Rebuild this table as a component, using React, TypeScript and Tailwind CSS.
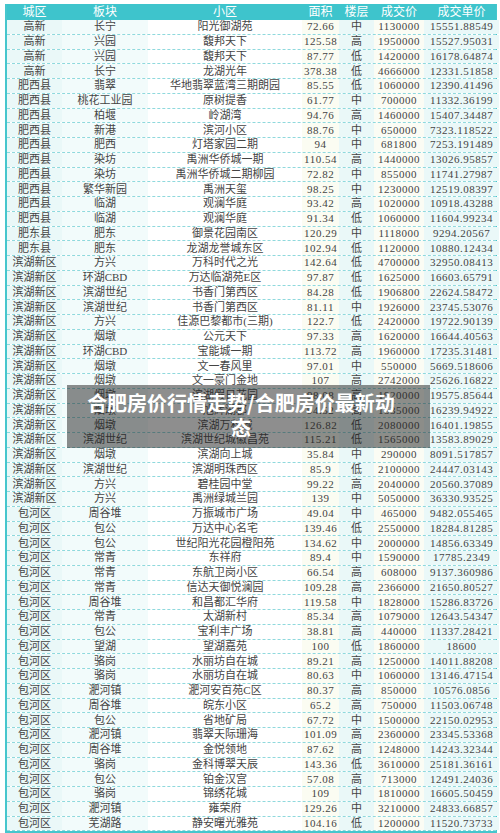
import React from "react";

type Row = [string, string, string, string, string, string, string];

const rows: Row[] = [
  ["高新", "长宁", "阳光御湖苑", "72.66", "中", "1130000", "15551.88549"],
  ["高新", "兴园", "馥邦天下", "125.58", "高", "1950000", "15527.95031"],
  ["高新", "兴园", "馥邦天下", "87.77", "低", "1420000", "16178.64874"],
  ["高新", "长宁", "龙湖光年", "378.38", "低", "4666000", "12331.51858"],
  ["肥西县", "翡翠", "华地翡翠蓝湾三期朗园", "85.55", "低", "1060000", "12390.41496"],
  ["肥西县", "桃花工业园", "原树提香", "61.77", "中", "700000", "11332.36199"],
  ["肥西县", "柏堰", "岭湖湾", "94.76", "高", "1460000", "15407.34487"],
  ["肥西县", "新港", "滨河小区", "88.76", "中", "650000", "7323.118522"],
  ["肥西县", "肥西", "灯塔家园二期", "94", "中", "681800", "7253.191489"],
  ["肥西县", "染坊", "禹洲华侨城一期", "110.54", "高", "1440000", "13026.95857"],
  ["肥西县", "染坊", "禹洲华侨城二期柳园", "72.82", "中", "855000", "11741.27987"],
  ["肥西县", "繁华新园", "禹洲天玺", "98.25", "中", "1230000", "12519.08397"],
  ["肥西县", "临湖", "观澜华庭", "93.42", "高", "1020000", "10918.43288"],
  ["肥西县", "临湖", "观澜华庭", "91.34", "低", "1060000", "11604.99234"],
  ["肥东县", "肥东", "御景花园南区", "120.29", "中", "1118000", "9294.20567"],
  ["肥东县", "肥东", "龙湖龙誉城东区", "102.94", "低", "1120000", "10880.12434"],
  ["滨湖新区", "方兴", "万科时代之光", "142.64", "低", "4700000", "32950.08413"],
  ["滨湖新区", "环湖CBD", "万达临湖苑E区", "97.87", "低", "1625000", "16603.65791"],
  ["滨湖新区", "滨湖世纪", "书香门第西区", "84.28", "低", "1906800", "22624.58472"],
  ["滨湖新区", "滨湖世纪", "书香门第西区", "81.11", "中", "1926000", "23745.53076"],
  ["滨湖新区", "方兴", "佳源巴黎都市(三期)", "122.7", "低", "2420000", "19722.90139"],
  ["滨湖新区", "烟墩", "公元天下", "97.33", "高", "1620000", "16644.40563"],
  ["滨湖新区", "环湖CBD", "宝能城一期", "113.72", "高", "1960000", "17235.31481"],
  ["滨湖新区", "烟墩", "文一春风里", "97.01", "中", "550000", "5669.518606"],
  ["滨湖新区", "烟墩", "文一豪门金地", "107", "高", "2742000", "25626.16822"],
  ["滨湖新区", "烟墩", "滨湖假日花园", "98.08", "高", "1920000", "19575.85644"],
  ["滨湖新区", "烟墩", "旭辉湖郡", "94.52", "高", "1535000", "16239.94922"],
  ["滨湖新区", "烟墩", "滨湖万科城", "126.82", "低", "2080000", "16401.19855"],
  ["滨湖新区", "滨湖世纪", "滨湖世纪城徽昌苑", "115.21", "低", "1565000", "13583.89029"],
  ["滨湖新区", "烟墩", "滨湖向上城", "35.84", "中", "290000", "8091.517857"],
  ["滨湖新区", "滨湖世纪", "滨湖明珠西区", "85.9", "低", "2100000", "24447.03143"],
  ["滨湖新区", "方兴", "碧桂园中堂", "99.22", "高", "2040000", "20560.37089"],
  ["滨湖新区", "方兴", "禹洲绿城兰园", "139", "中", "5050000", "36330.93525"],
  ["包河区", "周谷堆", "万振城市广场", "49.04", "中", "465000", "9482.055465"],
  ["包河区", "包公", "万达中心名宅", "139.46", "低", "2550000", "18284.81285"],
  ["包河区", "包公", "世纪阳光花园橙阳苑", "134.62", "中", "2000000", "14856.63349"],
  ["包河区", "常青", "东祥府", "89.4", "中", "1590000", "17785.2349"],
  ["包河区", "常青", "东航卫岗小区", "66.54", "高", "608000", "9137.360986"],
  ["包河区", "常青", "信达天御悦澜园", "109.28", "高", "2366000", "21650.80527"],
  ["包河区", "周谷堆", "和昌都汇华府", "119.58", "中", "1828000", "15286.83726"],
  ["包河区", "常青", "太湖新村", "85.34", "高", "1079000", "12643.54347"],
  ["包河区", "包公", "宝利丰广场", "38.81", "高", "440000", "11337.28421"],
  ["包河区", "望湖", "望湖嘉苑", "100", "低", "1860000", "18600"],
  ["包河区", "骆岗", "水丽坊自在城", "89.21", "高", "1250000", "14011.88208"],
  ["包河区", "骆岗", "水丽坊自在城", "80.63", "中", "1060000", "13146.47154"],
  ["包河区", "淝河镇", "淝河安百苑C区", "80.37", "高", "850000", "10576.0856"],
  ["包河区", "周谷堆", "皖东小区", "65.2", "高", "750000", "11503.06748"],
  ["包河区", "包公", "省地矿局", "67.72", "中", "1500000", "22150.02953"],
  ["包河区", "淝河镇", "翡翠天际珊海", "101.09", "高", "2360000", "23345.53368"],
  ["包河区", "周谷堆", "金悦领地", "87.62", "高", "1248000", "14243.32344"],
  ["包河区", "骆岗", "金科博翠天辰", "143.36", "低", "3610000", "25181.36161"],
  ["包河区", "包公", "铂金汉宫", "57.08", "高", "713000", "12491.24036"],
  ["包河区", "骆岗", "锦绣花城", "109", "中", "1810000", "16605.50459"],
  ["包河区", "淝河镇", "雍荣府", "129.26", "中", "3210000", "24833.66857"],
  ["包河区", "芜湖路", "静安曙光雅苑", "104.16", "低", "1200000", "11520.73733"],
];

const headers = ["城区", "板块", "小区", "面积", "楼层", "成交价", "成交单价"];

const colBg = [
  "bg-[#eaf8f8]",
  "bg-[#f2fbfb]",
  "bg-white",
  "bg-[#fbfcf2]",
  "bg-[#eaf8f8]",
  "bg-[#fbfcf4]",
  "bg-[#eaf8f8]",
];

const gridCols = "grid grid-cols-[55px_86px_154px_37px_35px_50px_75px]";

export default function App() {
  return (
    <div className="relative w-[500px] h-[833px] bg-white overflow-hidden" style={{ fontFamily: '"Liberation Serif", "Noto Sans CJK SC", serif' }}>
      <div className="pt-[4px] pl-[5px]">
        <div className="w-[492px] border-l-2 border-r border-b-2 border-[#46c6cd]">
          <div className={`${gridCols} h-[16px] bg-[#3ec4cc] text-white text-[12px] leading-none`}>
            {headers.map((h, i) => (
              <div key={i} className="flex items-center justify-center">{h}</div>
            ))}
          </div>
          {rows.map((r, ri) => (
            <div key={ri} className={`${gridCols} h-[14.75px] border-b border-dashed border-[#8fd9dd] text-[11px] leading-none text-[#444444]`}>
              {r.map((c, ci) => (
                <div key={ci} className={`flex items-center justify-center whitespace-nowrap ${colBg[ci]} ${ci >= 3 && ci !== 4 ? "tracking-[0.5px]" : ""}`}>
                  {c}
                </div>
              ))}
            </div>
          ))}
        </div>
      </div>
      <div className="absolute left-[67px] top-[385px] w-[363px] h-[63px] bg-[rgba(30,30,30,0.5)] pt-[5px]">
        <div className="ml-[13px] w-[322px] text-center text-white font-bold text-[20px] leading-[25px]" style={{ fontFamily: '"Noto Sans CJK SC", sans-serif' }}>
          合肥房价行情走势/合肥房价最新动态
        </div>
      </div>
    </div>
  );
}
